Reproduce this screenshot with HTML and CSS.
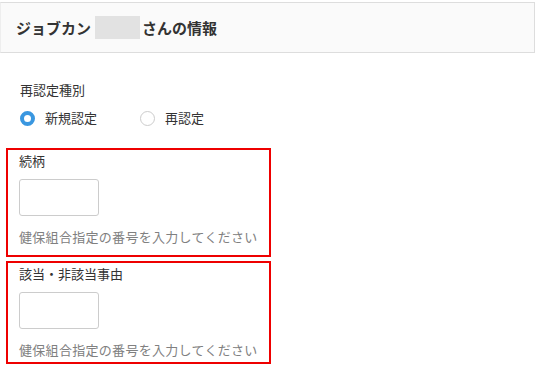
FILE: index.html
```html
<!DOCTYPE html>
<html lang="ja">
<head>
    <meta charset="UTF-8">
    <meta name="viewport" content="width=device-width, initial-scale=1.0">
    <title>ジョブカン さんの情報</title>
    <link rel="stylesheet" href="styles.css">
</head>

<body>
    <div class="panel-header">
        <h2>ジョブカン<span class="masked"></span>さんの情報</h2>
    </div>

    <div class="panel-body">
        <div class="field">
            <label class="field-label">再認定種別</label>
            <div class="radio-group">
                <label class="radio checked"><span class="dot"></span>新規認定</label>
                <label class="radio"><span class="dot"></span>再認定</label>
            </div>
        </div>

        <div class="field-box first">
            <label class="field-label">続柄</label>
            <input type="text" class="small-input">
            <p class="hint">健保組合指定の番号を入力してください</p>
        </div>

        <div class="field-box">
            <label class="field-label">該当・非該当事由</label>
            <input type="text" class="small-input">
            <p class="hint">健保組合指定の番号を入力してください</p>
        </div>
    </div>
</body>
</html>
```

FILE: styles.css
```css
body {
    font-family: "Noto Sans CJK JP", "Noto Sans", sans-serif;
    margin: 0;
    padding: 0;
    color: #333;
    background: white;
}

.panel-header {
    margin-top: 2px;
    width: 535px;
    height: 51px;
    background: #fafafa;
    border: 1px solid #dddddd;
    border-left-color: #eeeeee;
    display: flex;
    align-items: center;
    padding-left: 15px;
    box-sizing: border-box;
}

.panel-header h2 {
    margin: 0;
    font-size: 15px;
    font-weight: bold;
    color: #333;
    display: flex;
    align-items: center;
}

.masked {
    display: inline-block;
    width: 45px;
    height: 23px;
    background: #e2e2e2;
    margin: 0 2px 0 4px;
}

.panel-body {
    padding: 27px 0 0 6px;
}

.field {
    padding-left: 14px;
    margin-bottom: 20px;
}

.field-label {
    display: block;
    font-size: 13px;
    line-height: 20px;
    color: #333;
}

.radio-group {
    display: flex;
    margin-top: 8px;
}

.radio {
    display: flex;
    align-items: center;
    font-size: 13px;
    line-height: 20px;
    margin-right: 43px;
}

.dot {
    width: 15px;
    height: 15px;
    border: 1px solid #cccccc;
    border-radius: 50%;
    margin-right: 10px;
    box-sizing: border-box;
}

.radio.checked .dot {
    border: 4px solid #3a97e0;
    background: white;
}

.field-box {
    width: 265px;
    box-sizing: border-box;
    border: 2px solid #ee0000;
    padding: 1px 0 2px 11px;
    margin-bottom: 4px;
}

.field-box.first {
    padding-bottom: 8px;
}

.small-input {
    display: block;
    width: 80px;
    height: 37px;
    box-sizing: border-box;
    border: 1px solid #cccccc;
    border-radius: 3px;
    margin-top: 8px;
}

.hint {
    margin: 11px 0 0;
    font-size: 13px;
    line-height: 20px;
    letter-spacing: 0.3px;
    color: #808080;
}
```
